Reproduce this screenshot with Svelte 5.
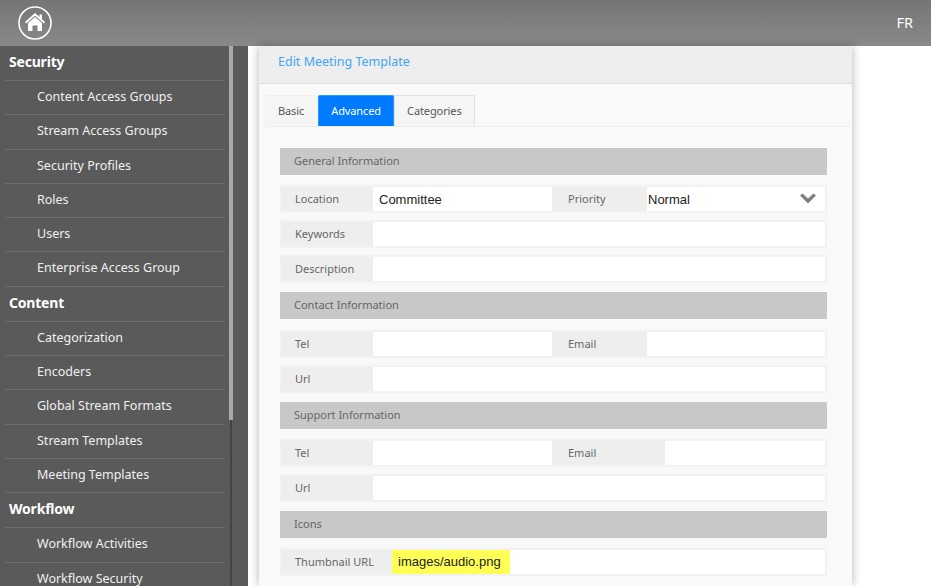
<script>
  const menu = [
    { head: 'Security', items: ['Content Access Groups', 'Stream Access Groups', 'Security Profiles', 'Roles', 'Users', 'Enterprise Access Group'] },
    { head: 'Content', items: ['Categorization', 'Encoders', 'Global Stream Formats', 'Stream Templates', 'Meeting Templates'] },
    { head: 'Workflow', items: ['Workflow Activities', 'Workflow Security'] }
  ];
  const tabs = ['Basic', 'Advanced', 'Categories'];
</script>

<div class="page">
  <header class="top">
    <svg class="home" width="34" height="34" viewBox="0 0 34 34" aria-label="Home">
      <circle cx="17" cy="17" r="16" fill="none" stroke="#fff" stroke-width="1.6" />
      <path d="M17 7 L21.5 11 V8.5 H24 V13.3 L27 16 L26 17.5 L17 9.8 L8 17.5 L7 16 Z" fill="#fff" />
      <path d="M10 17 L17 11 L24 17 V25 H19.5 V19.5 H14.5 V25 H10 Z" fill="#fff" />
    </svg>
    <span class="lang">FR</span>
  </header>
  <div class="main">
    <nav class="side">
      <div class="list">
        {#each menu as group}
          <div class="head">{group.head}</div>
          {#each group.items as item}
            <div class="item">{item}</div>
          {/each}
        {/each}
      </div>
      <div class="track"><div class="thumb"></div></div>
    </nav>
    <section class="card">
      <div class="title">Edit Meeting Template</div>
      <div class="tabs">
        {#each tabs as tab}
          <div class="tab" class:active={tab === 'Advanced'}>{tab}</div>
        {/each}
      </div>
      <div class="form">
        <div class="bar">General Information</div>
        <div class="row">
          <span class="lab">Location</span><input class="in half" value="Committee" />
          <span class="lab two">Priority</span>
          <div class="select"><span>Normal</span>
            <svg width="18" height="12" viewBox="0 0 18 12"><path d="M1 2.5 L3.5 0.5 L9 5.5 L14.5 0.5 L17 2.5 L9 10.5 Z" fill="#808080" /></svg>
          </div>
        </div>
        <div class="row"><span class="lab">Keywords</span><input class="in" /></div>
        <div class="row"><span class="lab">Description</span><input class="in" /></div>

        <div class="bar">Contact Information</div>
        <div class="row"><span class="lab">Tel</span><input class="in half" /><span class="lab two">Email</span><input class="in" /></div>
        <div class="row"><span class="lab">Url</span><input class="in" /></div>

        <div class="bar">Support Information</div>
        <div class="row"><span class="lab">Tel</span><input class="in half" /><span class="lab two wide">Email</span><input class="in" /></div>
        <div class="row"><span class="lab">Url</span><input class="in" /></div>

        <div class="bar">Icons</div>
        <div class="row"><span class="lab thumbl">Thumbnail URL</span><span class="hl">images/audio.png</span><input class="in" /></div>
      </div>
    </section>
  </div>
</div>

<style>
  :global(body) { margin: 0; background: #fff; }
  .page { width: 931px; height: 586px; overflow: hidden; font-family: "Noto Sans", sans-serif; display: flex; flex-direction: column; }
  .top { height: 46px; flex: none; box-sizing: border-box; padding: 6px 18px 0 18px; display: flex; justify-content: space-between; align-items: flex-start; background: linear-gradient(#757575, #898989); }
  .home { display: block; }
  .lang { color: #fff; font-size: 14.5px; margin-top: 6px; line-height: 20px; }
  .main { flex: 1; display: flex; min-height: 0; }
  .side { width: 248px; flex: none; background: #5a5a5a; display: flex; padding-right: 15px; box-sizing: border-box; }
  .list { width: 229px; flex: none; padding: 0 4px 0 5px; box-sizing: border-box; }
  .head { height: 34px; line-height: 31px; border-bottom: 1px solid #707070; color: #fff; font-weight: 700; font-size: 14px; padding-left: 4px; letter-spacing: -0.2px; }
  .item { height: 33.3px; line-height: 32.4px; border-bottom: 1px solid #707070; color: #f0f0f0; font-size: 12.5px; padding-left: 32px; }
  .track { width: 4px; flex: none; background: linear-gradient(to right, transparent 1px, #444 1px, #444 3px, transparent 3px); }
  .thumb { height: 374px; background: #aaa; }
  .card { width: 593px; margin-left: 11px; flex: none; background: #f9f9f9; box-shadow: 0 0 9px rgba(0, 0, 0, 0.3); }
  .title { height: 38px; box-sizing: border-box; background: #eee; border-bottom: 1px solid #ddd; color: #42a5f5; font-size: 12.5px; line-height: 31px; padding-left: 19px; }
  .tabs { display: flex; margin: 11px 3px 0 6px; height: 32px; box-sizing: border-box; border-bottom: 1px solid #eee; }
  .tab { height: 31px; box-sizing: border-box; padding: 0 12px; font-size: 11px; letter-spacing: -0.1px; line-height: 29px; color: #555; background: #f5f5f5; border: 1px solid #e2e2e2; border-bottom: none; }
  .tab:first-child { border-color: #f0f0f0; padding-right: 13px; }
  .tab.active { background: #007bff; border-color: #2a94ff; color: #fff; border-radius: 2px 2px 0 0; }
  .form { margin: 21px 25px 0 21px; }
  .bar { height: 27px; background: #c8c8c8; color: #666; font-size: 11px; line-height: 26px; padding-left: 14px; margin-top: 9px; margin-bottom: 10.3px; }
  .bar:first-child { margin-top: 0; }
  .row { display: flex; height: 28px; box-sizing: border-box; background: #eee; border: 2px solid #f2f2f2; border-left-width: 1px; margin-bottom: 7px; }
  .lab { width: 92px; flex: none; box-sizing: border-box; padding-left: 14px; font-size: 11px; line-height: 24px; color: #666; }
  .lab.two { width: 95px; padding-left: 16px; }
  .lab.two.wide { width: 113px; }
  .lab.thumbl { width: 111px; }
  .in { flex: 1; min-width: 0; height: 24px; box-sizing: border-box; border: none; background: #fff; padding: 0 6px; font-family: "Liberation Sans", sans-serif; font-size: 13px; color: #222; outline: none; border-radius: 0; }
  .in.half { flex: none; width: 179px; }
  .select { flex: 1; background: #fff; display: flex; align-items: center; justify-content: space-between; padding: 0 8px 0 1px; font-family: "Liberation Sans", sans-serif; font-size: 13px; color: #222; }
  .hl { width: 118px; flex: none; box-sizing: border-box; background: #ffff55; padding-left: 6px; height: 24px; line-height: 24px; font-family: "Liberation Sans", sans-serif; font-size: 13px; color: #222; }
</style>
